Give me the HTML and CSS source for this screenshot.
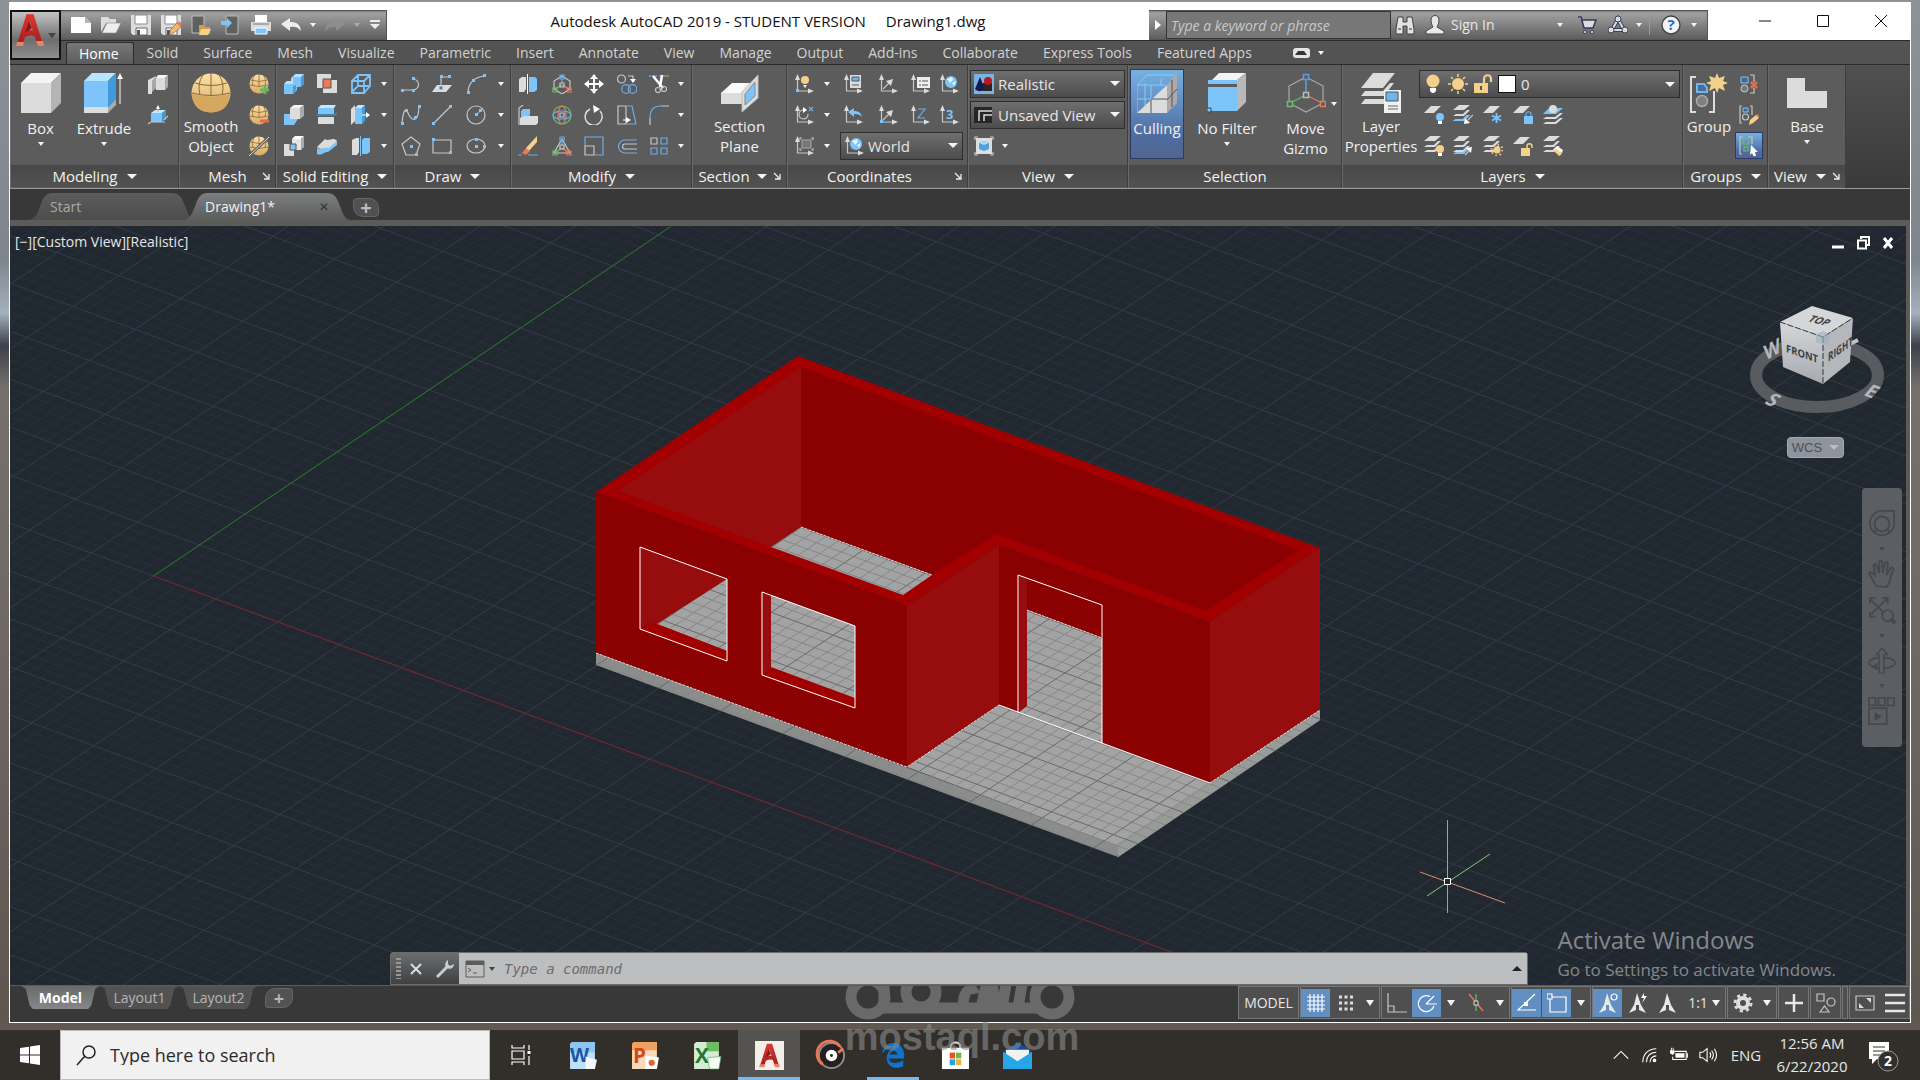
FILE: index.html
```html
<!DOCTYPE html>
<html lang="en">
<head>
    <meta charset="UTF-8">
    <title>Autodesk AutoCAD 2019</title>
    <link rel="stylesheet" href="styles.css">
</head>
<body>
<svg class="sprite" aria-hidden="true">
    <defs>
        <linearGradient id="gball" x1="0" y1="0" x2="0" y2="1"><stop offset="0" stop-color="#fbe0a8"/><stop offset="1" stop-color="#d9ab63"/></linearGradient>
        <linearGradient id="gred" x1="0" y1="0" x2="0" y2="1"><stop offset="0" stop-color="#d8372f"/><stop offset="1" stop-color="#a51c1f"/></linearGradient>
        <symbol id="logoA" viewBox="0 0 30 34"><path d="M5 31 13.500 4h3L25 31M7 23c5-4 11-4 16-1" fill="none" stroke="url(#gred)" stroke-width="5.500"/><path d="M2 29h7l-1 4H1zM21 28h7l1 5h-6z" fill="#e9846a"/><path d="M14 8l-4 12 7-5z" fill="#8c1518"/></symbol>
        <!-- quick access -->
        <symbol id="new" viewBox="0 0 20 20"><path d="M0 2h14l6 6v10H0z" fill="#fff"/><path d="M14 2v6h6z" fill="#b5b5b5"/></symbol>
        <symbol id="open" viewBox="0 0 20 20"><path d="M0 2h7l2 2h6v4H5L0 17z" class="w"/><path d="M6 8h14l-5 10H1z" fill="#eee" stroke="#888" stroke-width=".6"/></symbol>
        <symbol id="save" viewBox="0 0 20 20"><path d="M0 0h20v20H2l-2-2z" class="w"/><path d="M4 0h12v9H4z" fill="#fff" stroke="#888"/><path d="M5 13h11v7H5z" fill="#fff" stroke="#666"/><path d="M6 15h3v5H6z" fill="#555"/></symbol>
        <symbol id="saveas" viewBox="0 0 20 20"><use href="#save"/><path d="M8 20l2-6 6-6 4 4-7 6z" fill="#efb768" stroke="#555" stroke-width=".5"/><path d="M16 8l2-2 3 3-1 3z" class="r"/></symbol>
        <symbol id="mobopen" viewBox="0 0 20 20"><path d="M1 1h12v17H1z" fill="#606060" stroke="#bbb"/><path d="M8 10h5l1 2h5v7H8z" fill="#d59c47"/><path d="M10 14h10l-3 6H8z" class="t"/></symbol>
        <symbol id="mobsave" viewBox="0 0 20 20"><path d="M5 1h12v18H5z" fill="#606060" stroke="#bbb"/><path d="M0 6h6V3l5 5-5 5v-3H0z" class="b"/></symbol>
        <symbol id="print" viewBox="0 0 20 20"><path d="M4 0h12v7H4z" fill="#fff"/><path d="M0 7h20v9H0z" class="w"/><path d="M2 9h16" stroke="#777"/><path d="M4 13h12v6H4z" class="b" stroke="#fff"/></symbol>
        <symbol id="undo" viewBox="0 0 20 20"><path d="M0 9l9-6v4c7 0 10 2 11 9-3-4-6-5-11-4v4z" fill="#eee"/></symbol>
        <symbol id="redo" viewBox="0 0 20 20"><path d="M20 9l-9-6v4C4 7 1 9 0 16c3-4 6-5 11-4v4z" fill="#8e8e8e"/></symbol>
        <symbol id="custom" viewBox="0 0 12 12"><path d="M1 1h10v2H1zM1 5h10l-5 5z" fill="#eee"/></symbol>
        <symbol id="binoc" viewBox="0 0 20 20"><path d="M3 2h5v5h4V2h5l2 12v5h-7v-8H8v8H1v-5z" fill="#e2e2e2" stroke="#3e3e48"/><path d="M3 14h3M14 14h3" stroke="#888" stroke-width="2"/></symbol>
        <symbol id="user" viewBox="0 0 20 20"><path d="M6 5c0-6 8-6 8 0 0 3-1 5-2 7l7 4v3H1v-3l7-4C7 10 6 8 6 5z" fill="#e7e7e7" stroke="#444"/></symbol>
        <symbol id="cart" viewBox="0 0 20 20"><path d="M1 2h3l3 11h9l3-8H5" fill="#ddd" stroke="#333a5c" stroke-width="1.600"/><circle cx="8" cy="17" r="1.500" fill="#fff" stroke="#333a5c"/><circle cx="15" cy="17" r="1.500" fill="#fff" stroke="#333a5c"/></symbol>
        <symbol id="share" viewBox="0 0 20 20"><path d="M10 4l6 11H4z" fill="none" stroke="#39405e" stroke-width="4"/><path d="M10 4l6 11H4z" fill="none" stroke="#ddd" stroke-width="2"/><g fill="#ddd" stroke="#39405e"><circle cx="10" cy="4" r="3"/><circle cx="3" cy="15" r="3"/><circle cx="17" cy="15" r="3"/></g></symbol>
        <symbol id="help" viewBox="0 0 20 20"><circle cx="10" cy="10" r="9" fill="#f4f4f4" stroke="#444" stroke-width="1.400"/><text x="10" y="15" text-anchor="middle" fill="#1673c7" font-size="15" font-weight="700">?</text></symbol>
        <!-- modeling -->
        <symbol id="box" viewBox="0 0 40 40"><path d="M0 10h30v30H0z" class="w"/><path d="M0 10 10 0h30L30 10z" fill="#f4f4f4"/><path d="M30 10 40 0v30L30 40z" fill="#b4b4b4"/></symbol>
        <symbol id="extrude" viewBox="0 0 40 40"><path d="M0 34h24v6H0z" class="w"/><path d="M24 34l8-8v6l-8 8z" fill="#aaa"/><path d="M0 8h24v26H0z" class="b"/><path d="M0 8 8 0h24l-8 8z" fill="#b9e4fd"/><path d="M24 8l8-8v26l-8 8z" fill="#3e9be0"/><path d="M36 31V4" stroke="#fff"/><path d="M33 6l3-6 3 6z" fill="#fff"/></symbol>
        <symbol id="polysolid" viewBox="0 0 20 20"><path d="M0 6l8-4v12l-4 2v4H0z" class="w"/><path d="M4 7l4-5v12l-4 4z" fill="#a8a8a8"/><path d="M8 4h9v12H8z" class="w"/><path d="M8 4l2-3h10l-3 3z" fill="#f4f4f4"/><path d="M17 4l3-3v12l-3 3z" fill="#aaa"/></symbol>
        <symbol id="presspull" viewBox="0 0 20 20"><path d="M3 8h11v9H3z" class="b"/><path d="M3 8l4-3h11l-4 3z" fill="#c6e9fd"/><path d="M14 8l4-3v8l-4 4z" fill="#4097d7"/><path d="M0 19l3-2h14M20 11l-4 4M10 7V2" class="sw"/><path d="M8 4l2-4 2 4z" fill="#fff"/></symbol>
        <symbol id="smooth" viewBox="0 0 40 40"><circle cx="20" cy="20" r="19.500" fill="url(#gball)"/><path d="M1 20Q20 25 39 20M4 10Q20 15 36 10M20 0v23M12 2Q6 10 9 22M28 2q6 8 3 20" fill="none" stroke="#8a6a36"/><path d="M1 21Q20 26 39 21 38 39 20 39.500 2 39 1 21z" fill="#d6a75f"/></symbol>
        <symbol id="ball" viewBox="0 0 20 20"><circle cx="10" cy="10" r="9.500" fill="url(#gball)"/><path d="M1 11q9 3 18 0M2 6q8 3 16 0M10 0v12M5 2q-3 4-1 10M15 2q3 4 1 10" fill="none" stroke="#8a6a36" stroke-width=".8"/></symbol>
        <symbol id="ballplus" viewBox="0 0 20 20"><use href="#ball"/><path d="M11 16h10M16 11v10" stroke="#62b95c" stroke-width="3"/></symbol>
        <symbol id="ballminus" viewBox="0 0 20 20"><use href="#ball"/><path d="M11 16h9" stroke="#e46c4c" stroke-width="3"/></symbol>
        <symbol id="ballcut" viewBox="0 0 20 20"><use href="#ball"/><path d="M0 20 20 1" stroke="#5c5c5c" stroke-width="3"/><path d="M0 20 20 1" stroke="#ddd"/></symbol>
        <!-- solid editing -->
        <symbol id="union" viewBox="0 0 20 20"><path d="M0 10l3-3h4V4l4-4h9v10l-4 3h-3v3l-4 4H0z" class="b"/><path d="M0 10l3-3h4l1-3 4-4h8l-3 3H9v7z" fill="#b8e1fc"/><path d="M17 3l3-3v10l-3 3zM9 12l3-1v5l-3 4z" fill="#459cdc"/></symbol>
        <symbol id="interfere" viewBox="0 0 20 20"><path d="M0 0h14v14H0zM6 6h14v13H6z" class="w"/><path d="M6 5h8v9H6z" class="r" stroke="#555"/></symbol>
        <symbol id="wirebox" viewBox="0 0 20 20"><path d="M1 7h12v12H1zM1 7l6-6h12v11l-6 7M13 7l6-6M7 1v11l-6 6M7 12h11" fill="none" stroke="#7cc4fa" stroke-width="1.800"/></symbol>
        <symbol id="subtract" viewBox="0 0 20 20"><path d="M0 9h9v11H0zM9 14h5l-4 6H9z" class="b"/><path d="M6 3h10v11H6z" class="w"/><path d="M6 3l4-3h10l-4 3z" fill="#f4f4f4"/><path d="M16 3l4-3v11l-4 3z" fill="#aaa"/></symbol>
        <symbol id="slice" viewBox="0 0 20 20"><path d="M1 3h16v6H1z" class="b"/><path d="M1 3l3-3h15l-2 3z" fill="#c3e7fd"/><path d="M0 10h18l2-2" fill="none" stroke="#3a90d4" stroke-width="1.400"/><path d="M1 12h16v7H1z" class="w"/></symbol>
        <symbol id="taper" viewBox="0 0 20 20"><path d="M0 4l4-4v16l-4 4z" class="w"/><path d="M4 3h7v16H4z" class="b"/><path d="M4 3l3-3h7l-3 3z" fill="#c3e7fd"/><path d="M11 3l3-3v16l-3 3z" fill="#459cdc"/><path d="M11 10h5" stroke="#fff"/><path d="M15 7l4 3-4 3z" fill="#fff"/></symbol>
        <symbol id="intersect" viewBox="0 0 20 20"><path d="M0 8h10v12H0z" class="w"/><path d="M8 3h9v11H8z" fill="#e4e4e4"/><path d="M8 3l3-3h9l-3 3z" fill="#fff"/><path d="M17 3l3-3v11l-3 3z" fill="#aaa"/><path d="M6 8h6v6H6z" class="b" stroke="#555"/></symbol>
        <symbol id="thicken" viewBox="0 0 20 20"><path d="M0 12c6 3 6-5 13-4l7-3v4l-9 7c-5 0-6 4-11 2z" class="b"/><path d="M0 11l8-8c4 3 8-3 12 2l-8 7c-5-2-7 3-12-1z" class="w"/></symbol>
        <symbol id="separate" viewBox="0 0 20 20"><path d="M1 4l4-2h3v14l-2 3H1z" class="w"/><path d="M11 4l2-2h6v14l-3 2h-5z" class="b"/><path d="M9.500 0v20" stroke="#7cc4fa"/></symbol>
        <!-- draw -->
        <symbol id="pline" viewBox="0 0 20 20"><path d="M1 16h11a5.500 5.500 0 0 0 0-11" class="sw"/><path d="M0 15h3v3H0zM11 15h3v3h-3zM11 3h3v3h-3z" class="b"/></symbol>
        <symbol id="planar" viewBox="0 0 20 20"><path d="M5 11h15l-6 7H0z" class="w"/><path d="M9 15V3h8" class="sw"/><path d="M8 1h3v3H8zM16 1h3v3h-3z" class="b"/><path d="M7.500 12.500h3v3h-3z" fill="#3886c4"/></symbol>
        <symbol id="arc" viewBox="0 0 20 20"><path d="M2 18Q3 4 18 2" class="sw"/><path d="M1 17h3v3H1zM6 5h3v3H6zM17 0h3v3h-3z" class="b"/></symbol>
        <symbol id="spline" viewBox="0 0 20 20"><path d="M1 18C2 8 4 1 7 8s10 12 11-6" class="sw"/><path d="M0 17h3v3H0zM4 4h3v3H4zM13 11h3v3h-3zM17 0h3v3h-3z" class="b"/></symbol>
        <symbol id="line" viewBox="0 0 20 20"><path d="M2 18 18 2" class="sw"/><path d="M0 17h3v3H0zM17 0h3v3h-3z" class="b"/></symbol>
        <symbol id="circle" viewBox="0 0 20 20"><circle cx="10" cy="10" r="9" class="sw"/><path d="M10 10l5-5" class="sb"/><path d="M9 8h3v3H9zM13 4h3v3h-3z" class="b"/></symbol>
        <symbol id="polygon" viewBox="0 0 20 20"><path d="M10 1l9 7-4 11H5L1 8z" class="sw"/><path d="M9 9h3v3H9zM14 17h3v3h-3z" class="b"/></symbol>
        <symbol id="rect" viewBox="0 0 20 20"><path d="M1 4h18v13H1z" class="sw"/><path d="M0 2h3v3H0zM17 15h3v3h-3z" class="b"/></symbol>
        <symbol id="ellipse" viewBox="0 0 20 20"><ellipse cx="10" cy="10" rx="9" ry="7" class="sw"/><path d="M9 2h3v3H9zM9 9h3v3H9zM17 9h3v3h-3z" class="b"/></symbol>
        <!-- modify -->
        <symbol id="mirror" viewBox="0 0 20 20"><path d="M1 5l3-2h4v12l-2 3H1z" class="w"/><path d="M11 3h6l2 2v11l-3 2h-5z" class="b"/><path d="M9.500 0v20" stroke="#fff"/></symbol>
        <symbol id="g3move" viewBox="0 0 20 20"><path d="M10 2l8 5v8l-8 5-8-5V7z" class="sw"/><path d="M10 9V3" class="sb"/><path d="M10 11l-7 4" class="sg"/><path d="M10 11l7 4" class="sr"/><path d="M8 1h4v4H8z" class="sb"/><path d="M8 9h4v4H8z" class="sw"/><path d="M1 14h4v4H1z" class="sg"/><path d="M15 14h4v4h-4z" class="sr"/></symbol>
        <symbol id="move" viewBox="0 0 20 20"><path d="M10 2v16M2 10h16" stroke="#fff" stroke-width="2"/><path d="M6 5l4-5 4 5zM6 15l4 5 4-5zM5 6l-5 4 5 4zM15 6l5 4-5 4z" fill="#fff"/></symbol>
        <symbol id="copy" viewBox="0 0 20 20"><circle cx="4.500" cy="5" r="4" class="sw"/><path d="M11 2h5v4" class="sw"/><path d="M13 5h6l-3 4z" fill="#fff"/><circle cx="9" cy="15" r="4.300" class="sb"/><circle cx="15.500" cy="15" r="4.300" class="sb"/></symbol>
        <symbol id="trim" viewBox="0 0 20 20"><path d="M0 2h8" stroke="#5b9cdd" stroke-width="2" stroke-dasharray="2 1"/><path d="M10 2h10" stroke="#aaa"/><path d="M4 2l10 12M13 1l-2 12" stroke="#fff" stroke-width="2.500"/><circle cx="9" cy="16" r="2.500" class="sw"/><circle cx="15" cy="15" r="2.500" class="sw"/></symbol>
        <symbol id="align" viewBox="0 0 20 20"><path d="M1 20V3l4-3" class="sw"/><path d="M3 6l2-2h7v6l-3 3H3z" class="b"/><path d="M2 13l4-2h14v7l-2 2H2z" class="w"/></symbol>
        <symbol id="g3rot" viewBox="0 0 20 20"><circle cx="10" cy="10" r="9" class="sg"/><ellipse cx="10" cy="10" rx="4" ry="9" class="sr"/><ellipse cx="10" cy="10" rx="9" ry="4" class="sb"/><path d="M8 8h4v4H8z" class="sw"/></symbol>
        <symbol id="rotate" viewBox="0 0 20 20"><path d="M6 4a8.500 8.500 0 1 0 10 2" fill="none" stroke="#ddd" stroke-width="1.500"/><path d="M9 0l7 4-6 4z" fill="#fff"/></symbol>
        <symbol id="stretch" viewBox="0 0 20 20"><path d="M1 1h8v18H1z" class="sw"/><path d="M10 1h5l4 18h-9" class="sb"/><path d="M6 15h4" stroke="#fff"/><path d="M9 12l5 3-5 3z" fill="#fff"/></symbol>
        <symbol id="fillet" viewBox="0 0 20 20"><path d="M1 20v-7M12 1h8" class="sw"/><path d="M1 13Q1 1 12 1" class="sb"/></symbol>
        <symbol id="erase" viewBox="0 0 20 20"><path d="M0 19h4M10 19h10" class="sb"/><path d="M8 12l11-12v6l-9 10z" class="t"/><path d="M8 12l4 3-4 4-4-2z" class="r"/></symbol>
        <symbol id="g3scale" viewBox="0 0 20 20"><path d="M10 3l8 14H2z" class="sw"/><path d="M10 10V3" class="sb"/><path d="M10 12l-7 5" class="sg"/><path d="M10 12l7 5" class="sr"/><path d="M8 1h4v4H8z" class="sb"/><path d="M8 9h4v4H8z" class="sw"/><path d="M1 15h4v4H1z" class="sg"/><path d="M15 15h4v4h-4z" class="sr"/></symbol>
        <symbol id="scale" viewBox="0 0 20 20"><path d="M1 10V1h18v18h-8" class="sb"/><path d="M1 10h9v9H1z" class="sw"/></symbol>
        <symbol id="offset" viewBox="0 0 20 20"><path d="M20 4H8a6 6 0 0 0 0 13h12" class="sb"/><path d="M20 8H8a2.500 2.500 0 0 0 0 5h12" class="sw"/></symbol>
        <symbol id="array" viewBox="0 0 20 20"><path d="M2 2h6v6H2z" class="sw"/><path d="M12 2h6v6h-6zM2 12h6v6H2zM12 12h6v6h-6z" class="sb"/></symbol>
        <symbol id="section" viewBox="0 0 40 40"><path d="M1 20h22v11H1z" class="w"/><path d="M1 20 12 10h20l-9 10z" fill="#fafafa"/><path d="M22 19 38 2v23L22 39z" fill="#ddd" stroke="#bbb"/><path d="M25 21 35 9v14L25 32z" fill="#7cc4fa" stroke="#888"/></symbol>
        <!-- coordinates -->
        <symbol id="axes" viewBox="0 0 20 20"><path d="M3.500 3v14H17" class="sw"/><path d="M1 6l2.500-6L6 6zM14 14.500l6 2.500-6 2.500z" class="w"/></symbol>
        <symbol id="ucsicon" viewBox="0 0 20 20"><use href="#axes"/><circle cx="11" cy="6" r="4" class="t"/><path d="M9 11h4l-2 3z" fill="#fff"/><path d="M2 15h3v3H2z" class="b"/></symbol>
        <symbol id="ucsmgr" viewBox="0 0 20 20"><use href="#axes"/><path d="M7 1h11v13H7z" class="w"/><path d="M9 3h7v4H9z" fill="#6cb6ef" stroke="#555"/><path d="M9 11h7" stroke="#555"/></symbol>
        <symbol id="ucsarrow" viewBox="0 0 20 20"><use href="#axes"/><path d="M5 15l6-6" class="sw"/><path d="M15 5l-2 7-5-5z" class="w"/></symbol>
        <symbol id="ucslist" viewBox="0 0 20 20"><use href="#axes"/><path d="M7 3h13v11H7z" fill="#eee"/><path d="M9 7h2M12 7h6M9 11h2M12 11h6" stroke="#555"/></symbol>
        <symbol id="ucsworld" viewBox="0 0 20 20"><use href="#axes"/><circle cx="12" cy="8" r="6" class="b"/><path d="M8 5l5-2 1 3-3 3zM13 9l4-2-2 5z" fill="#e5f4ff"/></symbol>
        <symbol id="ucsx" viewBox="0 0 20 20"><use href="#axes"/><path d="M9 5a4.500 4.500 0 1 0 5 4" class="sw"/><path d="M9 2l4 3-4 3z" fill="#fff"/><path d="M15 2l4 4M19 2l-4 4" class="sb"/></symbol>
        <symbol id="ucsback" viewBox="0 0 20 20"><use href="#axes"/><path d="M5 7l6-4v3c5 0 7 2 8 6-3-3-5-3-8-3v3z" class="b"/></symbol>
        <symbol id="ucsorigin" viewBox="0 0 20 20"><use href="#ucsarrow"/><path d="M2 15h3v3H2z" class="b"/></symbol>
        <symbol id="ucsz" viewBox="0 0 20 20"><use href="#axes"/><path d="M8 4h7L8 13h7" class="sb"/></symbol>
        <symbol id="ucs3" viewBox="0 0 20 20"><use href="#axes"/><text x="7" y="14" fill="#7cc4fa" font-size="13" font-weight="700">3</text></symbol>
        <symbol id="ucsobj" viewBox="0 0 20 20"><use href="#axes"/><path d="M8 4h9v8H8z" fill="#777" stroke="#aaa"/><path d="M6 4V2h2M17 2h2v2M19 12v2h-2M8 14H6v-2" class="sw"/></symbol>
        <symbol id="realistic" viewBox="0 0 20 20"><path d="M0 0h20v20H0z" fill="#78b4e2"/><path d="M6 3l5 12c-3 3-7 3-10 0z" fill="#14184c"/><path d="M9 9h9v8H9z" fill="#2a2224"/><circle cx="14" cy="7" r="4" fill="#b8181c"/></symbol>
        <symbol id="unsaved" viewBox="0 0 20 20"><path d="M0 2h18v16H0z" fill="#262626"/><path d="M5 16V6h13M10 16V10h8" fill="none" stroke="#ddd" stroke-width="1.500"/></symbol>
        <symbol id="viewbox" viewBox="0 0 20 20"><path d="M2 2h16v16H2z" fill="#dedede"/><path d="M1 4V1h3M16 1h3v3M19 16v3h-3M4 19H1v-3" class="sw"/><path d="M5 7l5-2 5 2v6l-5 2-5-2z" fill="#4fa0dc"/><path d="M5 7l5-2 5 2-5 2z" fill="#a8dcfb"/></symbol>
        <!-- selection -->
        <symbol id="culling" viewBox="0 0 40 40"><path d="M0 40 30 12v28z" class="w"/><path d="M30 12 40 0v30L30 40z" fill="#aaa"/><path d="M0 40V12h28M0 26h14M14 12v14M0 12 10 2h28M8 10v22M24 12V6" fill="none" stroke="#7cd0ff"/><path d="M14 27v13M14 26h16M30 27l10-11M35 7v27" stroke="#555" fill="none"/></symbol>
        <symbol id="nofilter" viewBox="0 0 40 40"><path d="M5 7 12 0h27l-9 7z" fill="#f4f4f4"/><path d="M30 7 39 0v29l-9 9z" fill="#b9b9b9"/><path d="M1 7h29v4H1zM1 14h29v24H1z" class="b"/><path d="M0 35h4v4H0z" fill="#7cc4fa" stroke="#444"/></symbol>
        <symbol id="gizmo" viewBox="0 0 40 40"><path d="M20 4l17 9v17l-17 9-17-9V13z" fill="none" stroke="#aaa" stroke-width="1.200"/><path d="M20 21V5" class="sb"/><path d="M20 22 4 30" class="sg"/><path d="M20 22l16 8" class="sr"/><g fill="#5c5c5c" stroke-width="1.500"><path d="M17.500 1.500h5v5h-5z" stroke="#5b9cdd"/><path d="M17.500 19.500h5v5h-5z" stroke="#bbb"/><path d="M1.500 28.500h5v5h-5z" stroke="#6cc067"/><path d="M34.500 28.500h5v5h-5z" stroke="#e97b5c"/></g></symbol>
        <!-- layers -->
        <symbol id="layerprops" viewBox="0 0 40 40"><path d="M12 0h22L22 15H0zM0 23l4-5h18l7-8h4L23 23zM0 31l4-5h20v5z" class="w"/><path d="M23 17h17v23H23z" fill="#f0f0f0"/><path d="M25 19h12v9H25z" fill="#6cb6ef" stroke="#555"/><path d="M27 33h10M27 36h10" stroke="#666"/></symbol>
        <symbol id="sheet" viewBox="0 0 20 20"><path d="M7 1h10l-7 7H0z" class="w"/></symbol>
        <symbol id="sheets" viewBox="0 0 20 20"><path d="M6 0h11l-6 5H0zM0 11h11l6-6h-3l-4 4H3zM0 16h11l6-6h-3l-4 4H3z" class="w"/></symbol>
        <symbol id="bulb" viewBox="0 0 20 20"><circle cx="10" cy="7" r="6.500" class="t"/><path d="M7 14h6v3l-2 2H9l-2-2z" fill="#fff"/></symbol>
        <symbol id="sun" viewBox="0 0 20 20"><circle cx="10" cy="10" r="6" class="t"/><path d="M10 0v3M10 17v3M0 10h3M17 10h3M3 3l2 2M15 15l2 2M17 3l-2 2M3 17l2-2" stroke="#f4d18b" stroke-width="1.500"/></symbol>
        <symbol id="unlock" viewBox="0 0 20 20"><path d="M1 9h14v10H1z" class="t"/><path d="M11 9V5c0-5 7-5 7 0v3" fill="none" stroke="#f4d18b" stroke-width="2.200"/><path d="M8 12v4" stroke="#555" stroke-width="2"/></symbol>
        <symbol id="layoff" viewBox="0 0 20 20"><use href="#sheet"/><circle cx="16" cy="12" r="4" class="b"/><path d="M14 16h4v3h-4z" fill="#fff"/></symbol>
        <symbol id="layiso" viewBox="0 0 20 20"><use href="#sheets"/><path d="M0 16h11l6-6h-3l-4 4H3z" class="b"/><path d="M20 10l-5 5" class="sw"/><path d="M11 19l1-6 5 5z" fill="#fff"/></symbol>
        <symbol id="layfrz" viewBox="0 0 20 20"><use href="#sheet"/><path d="M13.500 8v10M9 10.500l9 5M9 15.500l9-5" stroke="#7cc4fa" stroke-width="1.800"/></symbol>
        <symbol id="laylck" viewBox="0 0 20 20"><use href="#sheet"/><path d="M11 11h9v8h-9z" class="b"/><path d="M13 11V9c0-3 5-3 5 0v2" class="sb"/></symbol>
        <symbol id="laycur" viewBox="0 0 20 20"><path d="M0 14h13l7-6h-3l-5 4H3zM0 19h13l7-6h-3l-5 4H3z" class="w"/><path d="M6 3h14l-7 6H0z" class="b"/><circle cx="10" cy="4" r="4" class="w"/></symbol>
        <symbol id="layon" viewBox="0 0 20 20"><use href="#sheets"/><circle cx="16" cy="13" r="4" class="t"/><path d="M14 17h4v3h-4z" fill="#fff"/></symbol>
        <symbol id="layuniso" viewBox="0 0 20 20"><use href="#sheets"/><path d="M0 18h11l6-6h-3l-4 4H3z" class="b"/><path d="M12 19l5-5" class="sw"/><path d="M19 11l-1 6-5-5z" fill="#fff"/></symbol>
        <symbol id="laythw" viewBox="0 0 20 20"><use href="#sheets"/><circle cx="14" cy="14" r="3.500" class="t"/><circle cx="14" cy="14" r="5.500" fill="none" stroke="#f4d18b" stroke-width="2" stroke-dasharray="1.500 2.800"/></symbol>
        <symbol id="layulk" viewBox="0 0 20 20"><use href="#sheet"/><path d="M8 12h9v8H8z" class="t"/><path d="M14 12v-2c0-3 5-3 5 0v2" fill="none" stroke="#f4d18b" stroke-width="1.500"/></symbol>
        <symbol id="laymch" viewBox="0 0 20 20"><use href="#sheets"/><path d="M10 14l4-4 6 4-1 3z" fill="#fff"/><path d="M10 14l4-1 5 5-3 2z" class="t"/></symbol>
        <!-- groups, base view -->
        <symbol id="group" viewBox="0 0 40 40"><path d="M7 4H2v35h5M20 39h5V18" fill="none" stroke="#ddd" stroke-width="2"/><path d="M8 11h7l3 4v4H8z" fill="#4a6d92" stroke="#6cb6ef" stroke-width="2"/><circle cx="13" cy="28" r="5.500" fill="#808080" stroke="#aaa" stroke-width="1.500"/><path d="M28 0l2 5 6-2-2 5 5 2-5 2 2 6-6-3-2 5-2-5-6 3 2-6-5-2 5-2-2-5 6 2z" class="t"/></symbol>
        <symbol id="ungroup" viewBox="0 0 20 20"><path d="M2 3h7v6H2z" fill="#44698f" stroke="#7cc4fa"/><circle cx="5.500" cy="14.500" r="3.500" fill="#777" stroke="#ccc"/><path d="M11 1h4v7M15 14v5h-4" class="sw"/><path d="M12 8l6 6M18 8l-6 6" stroke="#e46c4c" stroke-width="2.500"/></symbol>
        <symbol id="grpedit" viewBox="0 0 20 20"><path d="M3 1H1v17h2M11 1h2v9" class="sw"/><path d="M4 3h5v4H4z" fill="#44698f" stroke="#7cc4fa"/><circle cx="6.500" cy="12" r="3" class="sw"/><path d="M10 20l1-5 6-5 3 3-6 5z" class="t"/><path d="M17 10l2-1 1 2v2z" class="r"/></symbol>
        <symbol id="grpsel" viewBox="0 0 20 20"><path d="M4 1H1v17h2M9 1h4v7" class="sw"/><path d="M4 3h5l1 2v3H4zM5 11h4v4H5z" class="sg"/><path d="M12 9l7 7h-3l1 4-2 1-2-4-2 2z" fill="#fff"/></symbol>
        <symbol id="base" viewBox="0 0 40 40"><path d="M0 5h18v13h22v17H0z" class="w"/></symbol>
        <symbol id="launch" viewBox="0 0 8 8"><path d="M1 1l5 5M7 2v5H2" fill="none" stroke="#eee" stroke-width="1.300"/></symbol>
        <!-- status bar -->
        <symbol id="sgrid" viewBox="0 0 20 20"><path d="M4 1v18M8 1v18M12 1v18M16 1v18M1 4h18M1 8h18M1 12h18M1 16h18" class="sx"/></symbol>
        <symbol id="sdots" viewBox="0 0 20 20"><path d="M3 4h14M3 10h14M3 16h14" stroke="#ddd" stroke-width="3" stroke-dasharray="3 2.500"/></symbol>
        <symbol id="sortho" viewBox="0 0 20 20"><path d="M1 0v19h19M1 13h6v6" class="sw"/></symbol>
        <symbol id="spolar" viewBox="0 0 20 20"><path d="M17 13A8 8 0 1 1 13 3.500M9 11h11M9 11l8-8" class="sx"/></symbol>
        <symbol id="siso" viewBox="0 0 20 20"><path d="M3 1l14 17" class="sr"/><path d="M10 1v17" class="sg"/><path d="M8 8h4v4H8z" fill="#444" stroke="#ddd"/></symbol>
        <symbol id="strack" viewBox="0 0 20 20"><path d="M18 1 1 17h18" class="sx"/><path d="M7 9h4v4H7z" fill="#fff"/></symbol>
        <symbol id="ssnap" viewBox="0 0 20 20"><path d="M5 4h14v15H3V6" class="sx"/><path d="M0 1h5v5H0z" class="sx"/></symbol>
        <symbol id="sanno" viewBox="0 0 20 20"><path d="M9 0l4 12 5 8-7-3V12H8v5l-7 3 5-8z" fill="#e8e8e8"/></symbol>
        <symbol id="sanno1" viewBox="0 0 20 20"><use href="#sanno"/><circle cx="16" cy="4" r="3" class="sx"/></symbol>
        <symbol id="sanno2" viewBox="0 0 20 20"><use href="#sanno"/><path d="M16 0l-3 5h3l-2 5 5-7h-3z" fill="#fff"/></symbol>
        <symbol id="gear" viewBox="0 0 20 20"><circle cx="10" cy="10" r="5" fill="none" stroke="#ddd" stroke-width="4"/><circle cx="10" cy="10" r="8" fill="none" stroke="#ddd" stroke-width="3" stroke-dasharray="3.140 3.140"/></symbol>
        <symbol id="splus" viewBox="0 0 20 20"><path d="M10 1v18M1 10h18" stroke="#e8e8e8" stroke-width="2.500"/></symbol>
        <symbol id="sshapes" viewBox="0 0 20 20"><path d="M1 1h7v7H1zM4 19l4.500-6L13 19z" class="sw"/><circle cx="15" cy="9" r="4" class="sw"/></symbol>
        <symbol id="sfull" viewBox="0 0 20 20"><path d="M1 3h18v14H1z" class="sw"/><path d="M11 5h5v5zM4 10v5h5z" fill="#ddd"/></symbol>
        <symbol id="smenu" viewBox="0 0 20 20"><path d="M0 2h20M0 10h20M0 18h20" stroke="#e8e8e8" stroke-width="2.500"/></symbol>
        <!-- navigation bar -->
        <symbol id="nwheel" viewBox="0 0 30 30"><path d="M15 1h13v14a13 13 0 1 1-13-14z" class="nv"/><circle cx="15" cy="15" r="8" class="nv"/><path d="M20 20l4 4M10 20l-4 4" class="nv"/></symbol>
        <symbol id="npan" viewBox="0 0 30 30"><path d="M9 28C6 23 3 17 1 14c2-2 5 0 7 4L6 6c0-2 3-2 3 0l3 8V3c0-3 3-3 3 0l1 11 2-10c1-3 4-2 3 1l-1 11 4-7c2-2 4 0 3 2-3 6-3 13-7 18z" class="nv"/></symbol>
        <symbol id="nzoom" viewBox="0 0 30 30"><path d="M2 2l18 18M20 2 2 20M2 7V1h6M15 1h6v6M2 16v5h6" class="nv"/><circle cx="21" cy="20" r="6" fill="#5b5e63" stroke="#46494d" stroke-width="2"/><path d="M25 24l4 4" stroke="#46494d" stroke-width="4"/></symbol>
        <symbol id="norbit" viewBox="0 0 30 30"><ellipse cx="15" cy="17" rx="14" ry="6" class="nv"/><path d="M12 28V8H9l6-7 6 7h-4v20z" fill="#5b5e63" stroke="#46494d" stroke-width="1.500"/><path d="M10 17v8l-6-4z" fill="#46494d"/></symbol>
        <symbol id="nmotion" viewBox="0 0 30 30"><path d="M1 1h7v8H1zM11 1h7v8h-7zM21 1h7v8h-7zM1 12h19v17H1z" class="nv"/><path d="M7 16l8 5-8 5z" fill="#46494d"/></symbol>
    </defs>
</svg>

<div class="window">
    <header class="titlebar">
        <button class="app" aria-label="Application menu"><svg class="applogo"><use href="#logoA"/></svg><i class="caret dark"></i></button>
        <div class="qat">
            <button aria-label="New"><svg><use href="#new"/></svg></button>
            <button aria-label="Open"><svg><use href="#open"/></svg></button>
            <button aria-label="Save"><svg><use href="#save"/></svg></button>
            <button aria-label="Save as"><svg><use href="#saveas"/></svg></button>
            <button aria-label="Open from mobile"><svg><use href="#mobopen"/></svg></button>
            <button aria-label="Save to mobile"><svg><use href="#mobsave"/></svg></button>
            <button aria-label="Plot"><svg><use href="#print"/></svg></button>
            <button aria-label="Undo"><svg><use href="#undo"/></svg></button>
            <button class="thin" aria-label="Undo list"><i class="caret"></i></button>
            <button aria-label="Redo"><svg><use href="#redo"/></svg></button>
            <button class="thin" aria-label="Redo list"><i class="caret dim"></i></button>
            <button class="last" aria-label="Customize"><svg class="tiny"><use href="#custom"/></svg></button>
        </div>
        <h1 class="title"><span>Autodesk AutoCAD 2019 - STUDENT VERSION</span><span>Drawing1.dwg</span></h1>
        <div class="info">
            <button class="expand" aria-label="Collapse search"><i class="tri"></i></button>
            <input type="text" class="keyword" placeholder="Type a keyword or phrase" aria-label="Keyword">
            <button class="find" aria-label="Search"><svg><use href="#binoc"/></svg></button>
            <button class="signin"><svg><use href="#user"/></svg><span>Sign In</span><i class="caret"></i></button>
            <button class="find" aria-label="App store"><svg><use href="#cart"/></svg></button>
            <button class="pair" aria-label="Stay connected"><svg><use href="#share"/></svg><i class="caret"></i></button>
            <button class="pair sep" aria-label="Help"><svg><use href="#help"/></svg><i class="caret"></i></button>
        </div>
        <div class="winbtns">
            <button aria-label="Minimize"><svg viewBox="0 0 12 12"><path d="M0 6h12"/></svg></button>
            <button aria-label="Maximize"><svg viewBox="0 0 12 12"><path d="M.5.500h11v11H.5z"/></svg></button>
            <button aria-label="Close"><svg viewBox="0 0 12 12"><path d="M0 0l12 12M12 0 0 12"/></svg></button>
        </div>
    </header>

    <nav class="tabs">
        <a href="#" class="on">Home</a><a href="#">Solid</a><a href="#">Surface</a><a href="#">Mesh</a><a href="#">Visualize</a><a href="#">Parametric</a><a href="#">Insert</a><a href="#">Annotate</a><a href="#">View</a><a href="#">Manage</a><a href="#">Output</a><a href="#">Add-ins</a><a href="#">Collaborate</a><a href="#">Express Tools</a><a href="#">Featured Apps</a>
        <button class="minribbon" aria-label="Minimize ribbon"><span></span><i class="caret"></i></button>
    </nav>

    <div class="ribbon">
        <section class="panel p-modeling">
            <div class="tools">
                <button class="big"><svg><use href="#box"/></svg>Box<i class="caret"></i></button>
                <button class="big"><svg><use href="#extrude"/></svg>Extrude<i class="caret"></i></button>
                <div class="grid">
                    <button aria-label="Polysolid"><svg><use href="#polysolid"/></svg></button>
                    <button aria-label="Presspull"><svg><use href="#presspull"/></svg></button>
                </div>
            </div>
            <button class="plabel">Modeling<i class="caret l"></i></button>
        </section>
        <section class="panel p-mesh">
            <div class="tools">
                <button class="big two"><svg><use href="#smooth"/></svg>Smooth<br>Object</button>
                <div class="grid">
                    <button aria-label="Smooth more"><svg><use href="#ballplus"/></svg></button>
                    <button aria-label="Smooth less"><svg><use href="#ballminus"/></svg></button>
                    <button aria-label="Refine mesh"><svg><use href="#ballcut"/></svg></button>
                </div>
            </div>
            <button class="plabel">Mesh<svg class="launch"><use href="#launch"/></svg></button>
        </section>
        <section class="panel p-solid">
            <div class="tools grid">
                <button aria-label="Union"><svg><use href="#union"/></svg></button>
                <button aria-label="Interfere"><svg><use href="#interfere"/></svg></button>
                <button aria-label="Extract edges"><svg><use href="#wirebox"/></svg></button>
                <button aria-label="More edges"><i class="caret"></i></button>
                <button aria-label="Subtract"><svg><use href="#subtract"/></svg></button>
                <button aria-label="Slice"><svg><use href="#slice"/></svg></button>
                <button aria-label="Taper faces"><svg><use href="#taper"/></svg></button>
                <button aria-label="More faces"><i class="caret"></i></button>
                <button aria-label="Intersect"><svg><use href="#intersect"/></svg></button>
                <button aria-label="Thicken"><svg><use href="#thicken"/></svg></button>
                <button aria-label="Separate"><svg><use href="#separate"/></svg></button>
                <button aria-label="More bodies"><i class="caret"></i></button>
            </div>
            <button class="plabel">Solid Editing<i class="caret l"></i></button>
        </section>
        <section class="panel p-draw">
            <div class="tools grid">
                <button aria-label="Polyline"><svg><use href="#pline"/></svg></button>
                <button aria-label="Planar surface"><svg><use href="#planar"/></svg></button>
                <button aria-label="Arc"><svg><use href="#arc"/></svg></button>
                <button aria-label="More arcs"><i class="caret"></i></button>
                <button aria-label="Spline"><svg><use href="#spline"/></svg></button>
                <button aria-label="Line"><svg><use href="#line"/></svg></button>
                <button aria-label="Circle"><svg><use href="#circle"/></svg></button>
                <button aria-label="More circles"><i class="caret"></i></button>
                <button aria-label="Polygon"><svg><use href="#polygon"/></svg></button>
                <button aria-label="Rectangle"><svg><use href="#rect"/></svg></button>
                <button aria-label="Ellipse"><svg><use href="#ellipse"/></svg></button>
                <button aria-label="More ellipses"><i class="caret"></i></button>
            </div>
            <button class="plabel">Draw<i class="caret l"></i></button>
        </section>
        <section class="panel p-modify">
            <div class="tools grid">
                <button aria-label="3D mirror"><svg><use href="#mirror"/></svg></button>
                <button aria-label="3D move"><svg><use href="#g3move"/></svg></button>
                <button aria-label="Move"><svg><use href="#move"/></svg></button>
                <button aria-label="Copy"><svg><use href="#copy"/></svg></button>
                <button aria-label="Trim"><svg><use href="#trim"/></svg></button>
                <button aria-label="More trims"><i class="caret"></i></button>
                <button aria-label="3D align"><svg><use href="#align"/></svg></button>
                <button aria-label="3D rotate"><svg><use href="#g3rot"/></svg></button>
                <button aria-label="Rotate"><svg><use href="#rotate"/></svg></button>
                <button aria-label="Stretch"><svg><use href="#stretch"/></svg></button>
                <button aria-label="Fillet"><svg><use href="#fillet"/></svg></button>
                <button aria-label="More fillets"><i class="caret"></i></button>
                <button aria-label="Erase"><svg><use href="#erase"/></svg></button>
                <button aria-label="3D scale"><svg><use href="#g3scale"/></svg></button>
                <button aria-label="Scale"><svg><use href="#scale"/></svg></button>
                <button aria-label="Offset"><svg><use href="#offset"/></svg></button>
                <button aria-label="Array"><svg><use href="#array"/></svg></button>
                <button aria-label="More arrays"><i class="caret"></i></button>
            </div>
            <button class="plabel">Modify<i class="caret l"></i></button>
        </section>
        <section class="panel p-section">
            <div class="tools">
                <button class="big two"><svg><use href="#section"/></svg>Section<br>Plane</button>
            </div>
            <button class="plabel">Section<i class="caret l"></i><svg class="launch"><use href="#launch"/></svg></button>
        </section>
        <section class="panel p-coord">
            <div class="tools grid">
                <button aria-label="UCS icon"><svg><use href="#ucsicon"/></svg></button>
                <button aria-label="UCS icon list"><i class="caret"></i></button>
                <button aria-label="UCS manager"><svg><use href="#ucsmgr"/></svg></button>
                <button aria-label="UCS"><svg><use href="#ucsarrow"/></svg></button>
                <button aria-label="Named UCS"><svg><use href="#ucslist"/></svg></button>
                <button aria-label="World UCS"><svg><use href="#ucsworld"/></svg></button>
                <button aria-label="Rotate X"><svg><use href="#ucsx"/></svg></button>
                <button aria-label="Rotate list"><i class="caret"></i></button>
                <button aria-label="Previous UCS"><svg><use href="#ucsback"/></svg></button>
                <button aria-label="Origin"><svg><use href="#ucsorigin"/></svg></button>
                <button aria-label="Z vector"><svg><use href="#ucsz"/></svg></button>
                <button aria-label="3 point"><svg><use href="#ucs3"/></svg></button>
                <button aria-label="View UCS"><svg><use href="#ucsobj"/></svg></button>
                <button aria-label="View UCS list"><i class="caret"></i></button>
                <div class="combo"><svg><use href="#ucsworld"/></svg><select aria-label="UCS"><option>World</option></select><i class="caret l"></i></div>
            </div>
            <button class="plabel">Coordinates<svg class="launch"><use href="#launch"/></svg></button>
        </section>
        <section class="panel p-view">
            <div class="tools grid">
                <div class="combo"><svg><use href="#realistic"/></svg><select aria-label="Visual style"><option>Realistic</option></select><i class="caret l"></i></div>
                <div class="combo"><svg><use href="#unsaved"/></svg><select aria-label="View"><option>Unsaved View</option></select><i class="caret l"></i></div>
                <button class="vp" aria-label="Viewport configuration"><svg><use href="#viewbox"/></svg><i class="caret"></i></button>
            </div>
            <button class="plabel">View<i class="caret l"></i></button>
        </section>
        <section class="panel p-select">
            <div class="tools">
                <button class="big active"><svg><use href="#culling"/></svg>Culling</button>
                <button class="big"><svg><use href="#nofilter"/></svg>No Filter<i class="caret"></i></button>
                <button class="big"><svg><use href="#gizmo"/></svg>Move<br>Gizmo</button>
                <button class="side" aria-label="Gizmo list"><i class="caret"></i></button>
            </div>
            <div class="plabel">Selection</div>
        </section>
        <section class="panel p-layers">
            <div class="tools">
                <button class="big two"><svg><use href="#layerprops"/></svg>Layer<br>Properties</button>
                <div class="layers">
                    <div class="combo"><svg><use href="#bulb"/></svg><svg><use href="#sun"/></svg><svg><use href="#unlock"/></svg><span class="swatch"></span><select aria-label="Layer"><option>0</option></select><i class="caret l"></i></div>
                    <div class="grid">
                        <button aria-label="Layer off"><svg><use href="#layoff"/></svg></button>
                        <button aria-label="Isolate"><svg><use href="#layiso"/></svg></button>
                        <button aria-label="Freeze"><svg><use href="#layfrz"/></svg></button>
                        <button aria-label="Lock"><svg><use href="#laylck"/></svg></button>
                        <button aria-label="Make current"><svg><use href="#laycur"/></svg></button>
                        <button aria-label="Turn all on"><svg><use href="#layon"/></svg></button>
                        <button aria-label="Unisolate"><svg><use href="#layuniso"/></svg></button>
                        <button aria-label="Thaw all"><svg><use href="#laythw"/></svg></button>
                        <button aria-label="Unlock"><svg><use href="#layulk"/></svg></button>
                        <button aria-label="Match layer"><svg><use href="#laymch"/></svg></button>
                    </div>
                </div>
            </div>
            <button class="plabel">Layers<i class="caret l"></i></button>
        </section>
        <section class="panel p-groups">
            <div class="tools">
                <button class="big two"><svg><use href="#group"/></svg>Group</button>
                <div class="grid">
                    <button aria-label="Ungroup"><svg><use href="#ungroup"/></svg></button>
                    <button aria-label="Group edit"><svg><use href="#grpedit"/></svg></button>
                    <button class="active" aria-label="Group selection"><svg><use href="#grpsel"/></svg></button>
                </div>
            </div>
            <button class="plabel">Groups<i class="caret l"></i></button>
        </section>
        <section class="panel p-base">
            <div class="tools">
                <button class="big two"><svg><use href="#base"/></svg>Base<i class="caret"></i></button>
            </div>
            <button class="plabel">View<i class="caret l"></i><svg class="launch"><use href="#launch"/></svg></button>
        </section>
    </div>

    <div class="files">
        <button class="file">Start</button>
        <button class="file on">Drawing1*<span>✕</span></button>
        <button class="add" aria-label="New drawing">+</button>
    </div>

    <main class="viewport">
        <svg class="scene" viewBox="10 225 1896 759" preserveAspectRatio="xMidYMid slice">
            <defs>
                <clipPath id="floor">
                    <path d="M801 526 932 574 903 594 771 546zM727 578v72l-70-27zM771 594l84 31v72l-84-31zM1027 609l75 28v105l-84-30 9-7zM999 704l211 78 110-73v10L1118 856 596 664v-12l311 114z"/>
                </clipPath>
                <linearGradient id="face" x1="0" y1="0" x2="0" y2="1"><stop offset="0" stop-color="#d5d7da"/><stop offset="1" stop-color="#a6a9ae"/></linearGradient>
            </defs>
            <path class="grid-minor"/>
            <path class="grid-major"/>
            <path d="M153.500 575l516.500-349" stroke="#287a28"/>
            <path d="M153.500 575l1112.500 411" stroke="#7d2326"/>
            <g shape-rendering="geometricPrecision">
                <path d="M596 652l522 193 202-136v10L1118 856 596 664z" fill="#8a8d8a"/>
                <path d="M1118 845l202-136v10L1118 856z" fill="#989b98"/>
                <path d="M907 766l92-62 211 78 110-73-202 136z" fill="#a3a3a3"/>
                <path d="M596 491 798 355l522 192-110 74-211-77-92 61z" fill="#a20000"/>
                <path d="M618 490l183-124v160l-30 20z" fill="#970d0d"/>
                <path d="M801 366l498 183-93 61-210-77-64 41-131-48z" fill="#8b0000"/>
                <path d="M801 526l131 48-29 20-132-48z" fill="#a3a3a3"/>
                <path d="M596 491l311 114v161L596 652z" fill="#8b0000"/>
                <path d="M907 605l92-61v160l-92 62z" fill="#970d0d"/>
                <path d="M999 544l211 77v161l-211-78z" fill="#8b0000"/>
                <path d="M1210 621l110-74v162l-110 73z" fill="#970d0d"/>
                <path d="M640 546l87 32v82l-87-32z" fill="#970d0d"/>
                <path d="M727 578v72l-70-27z" fill="#a3a3a3"/>
                <path d="M640 628l9-6 8 1 70 27v10z" fill="#a20000"/>
                <path d="M762 591l93 34v82l-93-33z" fill="#a20000"/>
                <path d="M762 591l9 3v73l-9 7z" fill="#970d0d"/>
                <path d="M771 594l84 31v72l-84-31z" fill="#a3a3a3"/>
                <path d="M1018 574l9 4v127l-9 7z" fill="#970d0d"/>
                <path d="M1027 609l75 28v105l-84-30 9-7z" fill="#a3a3a3"/>
            </g>
            <g clip-path="url(#floor)">
                <path class="grid-minor tile"/>
                <path class="grid-major tile"/>
            </g>
            <path d="M640 546l87 32v82l-87-32zM762 591l93 34v82l-93-33zM1018 712V574l84 30v138M999 704l211 78" stroke="#fff"/>
            <path d="M801 526l131 48M596 652l311 114 92-62M1210 782l110-73M1027 609l75 28" stroke="#ddd" stroke-dasharray="3 1"/>
            <!-- crosshair -->
            <path d="M1447.500 819v93" stroke="#7ba9d6"/>
            <path d="M1427 895l63-42" stroke="#7fcb6b"/>
            <path d="M1420 871l85 31" stroke="#e08a66"/>
            <path d="M1444.500 877.500h6v6h-6z" stroke="#fff" fill="#212830"/>
        </svg>
        <button class="vplabel">[−][Custom View][Realistic]</button>
        <div class="vpwin">
            <button aria-label="Minimize drawing"><svg viewBox="0 0 14 14"><path d="M1 9.500h12v3H1z" fill="#fff"/></svg></button>
            <button aria-label="Restore drawing"><svg viewBox="0 0 14 14"><path d="M5 3V1h8v8h-2M2 4.500h8v8H2z" fill="none" stroke="#fff" stroke-width="2"/></svg></button>
            <button aria-label="Close drawing"><svg viewBox="0 0 14 14"><path d="M3 2l8 10M11 2 3 12" stroke="#fff" stroke-width="3"/></svg></button>
        </div>
        <svg class="cube" viewBox="1745 300 145 120">
            <ellipse cx="1817" cy="375" rx="61" ry="32" fill="none" stroke="#585b60" stroke-width="12"/>
            <g class="compass">
                <text x="-9" y="7" transform="translate(1772 349) rotate(-30) skewX(-20)">W</text>
                <text x="-6" y="7" transform="translate(1774 400) rotate(22) skewX(-20)">S</text>
                <text x="-5" y="7" transform="translate(1872 391) rotate(20) skewX(-20)">E</text>
                <path d="M1850 344l8-4" stroke="#c0c2c6" stroke-width="4"/>
            </g>
            <path d="M1812 306l41 12-30 19-43-15z" fill="#d4d6d8"/>
            <path d="M1780 322l43 15v47l-40-17z" fill="url(#face)"/>
            <path d="M1823 337l30-19-3 44-27 22z" fill="#b4b7bb"/>
            <path d="M1780 322l43 15 30-19M1823 337v47" fill="none" stroke="#33363a" stroke-dasharray="6 2"/>
            <path d="M1816 334l7-3 6 3v8l-6 3-7-3z" fill="#9fb0bd" opacity=".6"/>
            <g class="faces">
                <text transform="translate(1807 321) rotate(15) skewX(-30)">TOP</text>
                <text transform="translate(1786 352) rotate(19) skewX(19)">FRONT</text>
                <text transform="translate(1828 362) rotate(-35) skewX(-35)">RIGHT</text>
            </g>
        </svg>
        <button class="wcs">WCS<i class="caret"></i></button>
        <nav class="navbar">
            <button aria-label="Steering wheel"><svg><use href="#nwheel"/></svg></button><i class="caret nav"></i>
            <button class="pan" aria-label="Pan"><svg><use href="#npan"/></svg></button>
            <button aria-label="Zoom extents"><svg><use href="#nzoom"/></svg></button><i class="caret nav"></i>
            <button aria-label="Orbit"><svg><use href="#norbit"/></svg></button><i class="caret nav"></i>
            <button aria-label="Show motion"><svg><use href="#nmotion"/></svg></button>
        </nav>
        <div class="cmd">
            <div class="grip"></div>
            <button aria-label="Close command line"><svg viewBox="0 0 20 20"><path d="M5 5l10 10M15 5 5 15" stroke="#ddd" stroke-width="2"/></svg></button>
            <button aria-label="Customize command line"><svg viewBox="0 0 20 20"><path d="M2 18 12 8" stroke="#ccc" stroke-width="3"/><path d="M13 1c-3 2-4 6-1 8s7 0 7-4l-4 2-2-2z" fill="#ccc"/></svg></button>
            <label class="prompt"><svg viewBox="0 0 20 20"><path d="M1 2h18v16H1z" fill="none" stroke="#5c5c5c"/><path d="M1 2h18v4H1z" fill="#5c5c5c"/><path d="M3 9l3 2-3 2M8 14h4" fill="none" stroke="#5c5c5c"/></svg><i class="caret dark"></i>
                <input type="text" placeholder="Type a command"></label>
            <button class="hist" aria-label="Command history"><i class="tri up"></i></button>
        </div>
    </main>

    <footer class="bottom">
        <div class="layouts">
            <button class="on">Model</button><button>Layout1</button><button>Layout2</button><button class="plus" aria-label="New layout">+</button>
        </div>
        <div class="status">
            <div class="cell"><button class="model">MODEL</button></div>
            <div class="cell"><button class="on" aria-label="Grid"><svg><use href="#sgrid"/></svg></button><button aria-label="Snap"><svg><use href="#sdots"/></svg></button><button class="dd" aria-label="Snap options"><i class="caret"></i></button></div>
            <div class="cell"><button aria-label="Ortho"><svg><use href="#sortho"/></svg></button><button class="on" aria-label="Polar"><svg><use href="#spolar"/></svg></button><button class="dd" aria-label="Polar options"><i class="caret"></i></button><button aria-label="Isodraft"><svg><use href="#siso"/></svg></button><button class="dd" aria-label="Isodraft options"><i class="caret"></i></button></div>
            <div class="cell"><button class="on" aria-label="Snap tracking"><svg><use href="#strack"/></svg></button><button class="on" aria-label="Object snap"><svg><use href="#ssnap"/></svg></button><button class="dd" aria-label="Snap modes"><i class="caret"></i></button></div>
            <div class="cell"><button class="on" aria-label="Annotation visibility"><svg><use href="#sanno1"/></svg></button><button aria-label="Auto scale"><svg><use href="#sanno2"/></svg></button><button aria-label="Annotation scale"><svg><use href="#sanno"/></svg></button><button class="scale">1:1<i class="caret"></i></button></div>
            <div class="cell"><button aria-label="Workspace"><svg><use href="#gear"/></svg></button><button class="dd" aria-label="Workspaces"><i class="caret"></i></button></div>
            <div class="cell"><button aria-label="Annotation monitor"><svg><use href="#splus"/></svg></button></div>
            <div class="cell"><button aria-label="Isolate objects"><svg><use href="#sshapes"/></svg></button></div>
            <div class="cell slim"></div>
            <div class="cell"><button aria-label="Clean screen"><svg><use href="#sfull"/></svg></button><button aria-label="Customization"><svg><use href="#smenu"/></svg></button></div>
        </div>
    </footer>
</div>

<div class="taskbar">
    <button class="start" aria-label="Start"><svg viewBox="0 0 20 20"><path d="M0 3l9-1.300V9.500H0zM10 1.500 20 0v9.500H10zM0 10.500h9v7.800L0 17zM10 10.500h10V20l-10-1.500z" fill="#fff"/></svg></button>
    <label class="tsearch"><svg viewBox="0 0 20 20"><circle cx="13" cy="7" r="6" fill="none" stroke="#222" stroke-width="1.500"/><path d="M9 11l-8 9" stroke="#222" stroke-width="1.500"/></svg><input type="text" placeholder="Type here to search"></label>
    <div class="apps">
        <button aria-label="Task view"><svg class="tv" viewBox="0 0 20 20"><path d="M1 0v3h12V0M1 20v-3h12v3M1 6h12v8H1zM18 0v5M18 11v9" fill="none" stroke="#fff" stroke-width="1.200"/><path d="M16.500 6h3v3h-3z" fill="#fff"/></svg></button>
        <button aria-label="Word"><svg viewBox="0 0 28 28"><path d="M3 1h22v26H1V3z" fill="#bfe0f8"/><path d="M3 1h22v10H1V3z" fill="#8fc4ee"/><text x="1" y="20" font-size="19" font-weight="700" fill="#1757a8">W</text><path d="M16 15l11 3-2 9h-9z" fill="#f4f8fc"/></svg></button>
        <button aria-label="PowerPoint"><svg viewBox="0 0 28 28"><path d="M3 1h22v26H1V3z" fill="#fad9b8"/><path d="M3 1h22v8H1V3z" fill="#f0a15f"/><text x="2" y="21" font-size="20" font-weight="700" fill="#d24a1c">P</text><path d="M14 14l13 2-2 11H14z" fill="#fff"/><circle cx="20" cy="21" r="3" fill="#e0662f"/></svg></button>
        <button aria-label="Excel"><svg viewBox="0 0 28 28"><path d="M3 1h22v26H1V3z" fill="#d5ecd0"/><path d="M13 1h12v9H13z" fill="#6cbc62"/><text x="2" y="21" font-size="20" font-weight="700" fill="#1f7a35">X</text><path d="M14 16l13-1-2 12H16z" fill="#f4fbf2" stroke="#5fa35d" stroke-width=".6"/></svg></button>
        <button class="cur" aria-label="AutoCAD"><svg viewBox="0 0 30 30"><path d="M0 0h30v30H0z" fill="#f3efe8"/><use href="#logoA" x="3" y="2" width="24" height="26"/></svg></button>
        <button aria-label="Groove"><svg viewBox="0 0 30 30"><circle cx="15" cy="15" r="13" fill="#24211f" stroke="#8c8c94" stroke-width="2"/><path d="M6 24A13 13 0 1 1 24 6" fill="none" stroke="#e9775a" stroke-width="3"/><path d="M22 12l5-4" stroke="#e9775a" stroke-width="3"/><circle cx="15" cy="15" r="6" fill="#fff"/><circle cx="15" cy="15" r="1.500" fill="#222"/></svg></button>
        <button class="run" aria-label="Edge"><svg viewBox="0 0 30 30"><path d="M10 18h16c2-19-19-22-23-5 4-5 9-7 12-6-8 4-9 13-4 18 4 4 10 3 14 1v-6c-6 4-14 4-15-2zm1-4c1-5 8-5 8 0z" fill="#0f73d0"/></svg></button>
        <button aria-label="Store"><svg viewBox="0 0 30 30"><path d="M10 8V6c0-6 10-6 10 0v2" fill="none" stroke="#ddd" stroke-width="2"/><path d="M1 7h28v22H1z" fill="#fff"/><path d="M9 12h5.500v6H9z" fill="#e8501e"/><path d="M15.500 12H21v6h-5.500z" fill="#74b93e"/><path d="M9 19h5.500v6H9z" fill="#22a2e4"/><path d="M15.500 19H21v6h-5.500z" fill="#f0b040"/></svg></button>
        <button aria-label="Mail"><svg viewBox="0 0 30 30"><path d="M0 11 15 1l15 10v18H0z" fill="#0f4ea8"/><path d="M3 9h24v6L15 22 3 15z" fill="#f2f2f2"/><path d="M0 11l15 10 15-10v18H0z" fill="#26a5e8"/></svg></button>
    </div>
    <div class="tray">
        <button aria-label="Hidden icons"><svg viewBox="0 0 20 20"><path d="M2 14l8-8 8 8" class="tr"/></svg></button>
        <button aria-label="Network"><svg viewBox="0 0 20 20"><path d="M2 18C2 9 8 3 17 3M6 18c0-6 4-11 11-11M10 18c0-4 3-7 7-7" class="tr"/><circle cx="15" cy="16" r="2" fill="#fff"/></svg></button>
        <button aria-label="Battery"><svg viewBox="0 0 20 20"><path d="M5 6h13v9H3v-3" class="tr"/><path d="M6 8h10v5H6z" fill="#fff"/><path d="M19 8h1v5h-1zM0 5h5v3L3 10 0 8zM1 2h1v3H1zM3 2h1v3H3z" fill="#fff"/></svg></button>
        <button aria-label="Volume"><svg viewBox="0 0 20 20"><path d="M1 7h3l5-4v14l-5-4H1zM12 7q2 3 0 6M14 5q4 5 0 10M17 3q5 7 0 14" class="tr"/></svg></button>
        <button class="lang">ENG</button>
        <button class="clock"><span>12:56 AM</span><span>6/22/2020</span></button>
        <button class="note" aria-label="Notifications"><svg viewBox="0 0 32 32"><path d="M1 3h20v17H9l-5 5v-5H1z" fill="#fff"/><path d="M5 8h12M5 12h12M5 16h8" stroke="#33302c"/><circle cx="20" cy="22" r="10" fill="#33302c" stroke="#999"/><text x="20" y="27" text-anchor="middle" font-size="14" font-weight="700" fill="#fff">2</text></svg></button>
    </div>
</div>

<div class="activate"><p>Activate Windows</p><p>Go to Settings to activate Windows.</p></div>
<div class="mark">
    <svg viewBox="0 11 230 40"><g fill="none" stroke="#8b8b8b" stroke-width="11"><path d="M39 33V5M36 33h158M118 33q0-14 5-17t6 3M136 33l4-18q10-8 8 6l-2 12M157 33l4-24M173 33l4-24"/><ellipse cx="23" cy="22" rx="17" ry="17"/><circle cx="76" cy="17" r="15"/><ellipse cx="207" cy="22" rx="17" ry="17"/></g></svg>
    <span>mostaql.com</span>
</div>

<script>
    // world axes of the drawing on screen: one major cell along X and along Y
    var origin = [153.5, 575];
    var ax = [62, 22.9];
    var ay = [45.9, -31];

    function point(u, v) {
        return (origin[0] + ax[0] * u + ay[0] * v).toFixed(1) + ' ' + (origin[1] + ax[1] * u + ay[1] * v).toFixed(1);
    }

    function lines(major) {
        var d = '';
        for (var i = -150; i <= 200; i++) {
            if ((i % 5 === 0) !== major) {
                continue;
            }
            d += 'M' + point(i / 5, -40) + 'L' + point(i / 5, 40);
            d += 'M' + point(-40, i / 5) + 'L' + point(40, i / 5);
        }
        return d;
    }

    function fill(selector, d) {
        var paths = document.querySelectorAll(selector);
        for (var i = 0; i < paths.length; i++) {
            paths[i].setAttribute('d', d);
        }
    }
    fill('.grid-minor', lines(false));
    fill('.grid-major', lines(true));
</script>
</body>
</html>
```

FILE: styles.css
```css
* {
    box-sizing: border-box;
    margin: 0;
    padding: 0;
}

body {
    height: 100vh;
    display: flex;
    flex-direction: column;
    position: relative;
    overflow: hidden;
    font: 14px/20px "Open Sans", "Noto Sans", sans-serif;
    color: #e6e6e6;
    background: linear-gradient(#8d9297 0, #7f858c 24%, #a4b0bd 29%, #3c414c 32%, #75706c 36%, #6f6862 60%, #5e5750 94%, #6a6259);
}

button, input, select {
    font: inherit;
    color: inherit;
    background: none;
    border: 0;
    outline: 0;
    white-space: nowrap;
}

button {
    display: flex;
    align-items: center;
    justify-content: center;
}

svg {
    width: 20px;
    height: 20px;
    flex: none;
    overflow: visible;
}

.sprite {
    position: absolute;
    width: 0;
    height: 0;
}

/* icon paints */
.w { fill: #dcdcdc; }
.b { fill: #7cc4fa; }
.t { fill: #f4d18b; }
.r { fill: #e97b5c; }
.sw, .sb, .sg, .sr, .sx, .nv, .tr { fill: none; stroke-width: 1.2; }
.sw { stroke: #c6c6c6; }
.sb { stroke: #6cabe6; }
.sg { stroke: #6cc067; }
.sr { stroke: #e97b5c; }
.sx, .tr { stroke: #fff; }
.nv { stroke: #46494d; stroke-width: 2; }

.caret {
    border: 3px solid transparent;
    border-top: 4px solid #f4f4f4;
    border-bottom: 0;
    flex: none;
}
.caret.l { border-width: 5px 5px 0; }
.caret.dark { border-top-color: #444; }
.caret.dim { border-top-color: #aaa; }
.caret.nav { border-top-color: #46494d; align-self: center; }

.tri {
    border: 5px solid transparent;
    border-left: 6px solid #fff;
    border-right: 0;
}
.tri.up {
    border: 5px solid transparent;
    border-bottom: 5px solid #222;
    border-top: 0;
}

.window {
    flex: 1;
    min-height: 0;
    margin: 2px 9px 7px;
    border: 1px solid #fff;
    border-top: 0;
    display: flex;
    flex-direction: column;
    background: #383838;
}

/* title bar */
.titlebar {
    height: 38px;
    flex: none;
    display: flex;
    align-items: flex-end;
    background: #fff;
    padding-left: 51px;
    position: relative;
}
.app {
    position: absolute;
    z-index: 2;
    left: 0;
    top: 8px;
    width: 51px;
    height: 50px;
    border: 2px solid #111;
    background: linear-gradient(#c4c4c4, #6e6e6e 60%, #8e8e8e);
    gap: 3px;
}
.app .applogo { width: 30px; height: 34px; margin-bottom: 10px; }
.app .caret { border-width: 5px 4px 0; }

.qat, .info {
    height: 30px;
    display: flex;
    align-items: center;
    background: linear-gradient(#7f7f7f, #a0a0a0 8%, #5e5e5e);
    border: 1px solid #555;
    border-left: 0;
}
.qat { padding-left: 5px; }
.qat button { width: 30px; height: 28px; }
.qat .thin { width: 14px; }
.qat .last { width: 22px; }
.tiny { width: 12px; height: 12px; }

.title {
    flex: 1;
    display: flex;
    justify-content: center;
    align-self: center;
    gap: 20px;
    font-size: 15px;
    font-weight: 400;
    color: #111;
    white-space: nowrap;
}
.expand { width: 17px; }
.keyword {
    width: 225px;
    height: 28px;
    padding-left: 4px;
    background: #777;
    border: 1px solid #333;
}
.keyword::placeholder { color: #c9c9c9; font-style: italic; opacity: 1; }
.find { width: 28px; }
.signin { width: 154px; gap: 6px; padding: 0 10px 0 6px; }
.signin span { flex: 1; text-align: left; }
.pair { width: 48px; gap: 8px; }
.pair.sep { width: 58px; border-left: 1px solid #999; gap: 10px; }

.winbtns { display: flex; margin-left: 28px; height: 38px; }
.winbtns button { width: 58px; }
.winbtns svg { width: 12px; height: 12px; }
.winbtns path { stroke: #111; fill: none; }

/* ribbon tabs */
.tabs {
    height: 25px;
    flex: none;
    display: flex;
    align-items: flex-end;
    gap: 1px;
    padding-left: 56px;
    background: #535353;
    border-top: 1px solid #2b2b2b;
    border-bottom: 1px solid #2b2b2b;
}
.tabs a {
    padding: 0 12px;
    height: 22px;
    line-height: 22px;
    color: #d2d2d2;
    text-decoration: none;
    white-space: nowrap;
}
.tabs .on {
    color: #fff;
    background: linear-gradient(#777, #5c5c5c);
    border: 1px solid #2b2b2b;
    border-bottom: 0;
    border-radius: 3px 3px 0 0;
    padding-right: 14px;
}
.minribbon { gap: 8px; height: 22px; margin-left: 28px; }
.minribbon span {
    width: 17px;
    height: 10px;
    border-radius: 3px;
    background: #e4e4e4;
}
.minribbon span::after {
    content: "";
    display: block;
    width: 6px;
    margin: 3px auto;
    border: 3px solid transparent;
    border-top: 0;
    border-bottom: 4px solid #333;
}

/* ribbon panels */
.ribbon {
    height: 124px;
    flex: none;
    display: flex;
    background: linear-gradient(#505050, #3a3a3a);
    border-bottom: 1px solid #9a9a9a;
}
.panel {
    display: flex;
    flex-direction: column;
    background: #5c5c5c;
    border-right: 1px solid #3e3e3e;
    border-left: 1px solid #6a6a6a;
}
.tools {
    height: 100px;
    display: flex;
    padding-top: 3px;
}
.plabel {
    width: 100%;
    height: 22px;
    display: flex;
    align-items: center;
    justify-content: center;
    gap: 9px;
    position: relative;
    font-size: 15px;
    background: linear-gradient(#484848, #525252);
    color: #f2f2f2;
}
.launch {
    position: absolute;
    right: 5px;
    top: 7px;
    width: 8px;
    height: 8px;
}
.big {
    flex-direction: column;
    justify-content: flex-start;
    padding-top: 5px;
    font-size: 15px;
    color: #f0f0f0;
}
.big svg { width: 40px; height: 40px; margin-bottom: 5px; }
.big.two svg { margin-bottom: 3px; }
.big .caret { margin-top: 4px; }
.active {
    background: linear-gradient(#78b0e2, #4f6ca0 75%, #52658f);
    border: 1px solid #2b3b68;
}
.grid {
    display: grid;
    grid-auto-rows: 31px;
}

.p-modeling { width: 169px; }
.p-modeling .big { width: 68px; }
.p-modeling .big:first-child { width: 59px; }
.p-modeling .grid { flex: 1; }
.p-mesh { width: 97px; }
.p-mesh .big { width: 62px; }
.p-mesh .grid { flex: 1; }
.p-solid { width: 118px; }
.p-solid .grid { grid-template-columns: 33px 34px 33px 14px; }
.p-draw { width: 117px; }
.p-draw .grid { grid-template-columns: 32px 30px 38px 12px; }
.p-modify { width: 181px; }
.p-modify .grid { grid-template-columns: 32px 36px 28px 38px 26px 18px; }
.p-section { width: 95px; }
.p-section .big { width: 94px; }
.p-section .plabel { padding-right: 14px; gap: 7px; }
.p-coord { width: 181px; }
.p-coord .grid { grid-template-columns: 32px 14px 37px 34px 29px 29px; }
.p-coord .combo { grid-column: 3 / span 4; margin-left: 6px; }
.p-coord .plabel { padding-right: 16px; }
.p-view { width: 160px; }
.p-view .tools { padding: 3px 2px 0 1px; }
.p-view .vp { justify-content: flex-start; gap: 8px; padding-left: 4px; }
.p-select { width: 214px; }
.p-select .big { width: 84px; }
.p-select .big.active { width: 54px; height: 90px; margin: 1px; padding-top: 3px; }
.p-select .big:nth-child(3) { width: 73px; }
.p-layers { width: 341px; }
.p-layers .big { width: 76px; }
.layers { flex: 1; }
.layers .combo { margin: 2px 2px 1px 0; gap: 5px; }
.layers .grid { grid-template-columns: 29px 30px 29px 31px 30px; }
.p-groups { width: 85px; }
.p-groups .big { width: 50px; }
.p-groups .grid { grid-template-columns: 30px; }
.p-groups .active { margin: 2px 1px; }
.p-base { width: 78px; }
.p-base .big { width: 76px; }
.p-base .plabel { padding-right: 14px; }
.side { width: 8px; margin-bottom: 26px; margin-left: -12px; }

.combo {
    height: 28px;
    margin: 1px 0;
    align-self: center;
    display: flex;
    align-items: center;
    gap: 4px;
    padding: 0 4px 0 3px;
    font-size: 15px;
    border: 1px solid #2e2e2e;
    background: linear-gradient(#6f6f6f, #4c4c4c);
}
.combo select { flex: 1; min-width: 0; appearance: none; }
.swatch {
    width: 18px;
    height: 18px;
    background: #fff;
    border: 1px solid #111;
}

/* drawing tabs */
.files {
    height: 37px;
    flex: none;
    display: flex;
    align-items: flex-start;
    padding: 4px 0 0 16px;
    background: #383838;
    border-bottom: 6px solid #5b5b58;
}
.file {
    width: 170px;
    height: 27px;
    justify-content: flex-start;
    padding-left: 24px;
    margin-right: -15px;
    color: #a9a9a9;
    background: linear-gradient(#5c5c5c, #4c4c4c);
    clip-path: path("M0 27C12 27 12 16 17 6Q20 0 26 0H146Q153 0 156 6C161 16 162 27 170 27Z");
}
.file.on { color: #f2f2f2; background: linear-gradient(#7c7f80, #5c5c5c); }
.file span { margin-left: 44px; font-size: 12px; color: #333; }
.add, .plus {
    background: #505050;
    border: 1px solid #666;
    font-weight: 700;
    color: #bbb;
}
.add {
    width: 26px;
    height: 19px;
    margin: 5px 0 0 17px;
    font-size: 20px;
    border-radius: 4px 10px 4px 10px;
}

/* model space */
.viewport {
    flex: 1;
    min-height: 0;
    position: relative;
    background: #212830;
    border-right: 4px solid #5b5b58;
}
.scene {
    display: block;
    width: 100%;
    height: 100%;
    position: absolute;
    overflow: hidden;
    fill: none;
}
.grid-minor { stroke: #272f3a; }
.grid-major { stroke: #343b4a; }
.grid-minor.tile { stroke: #858789; }
.grid-major.tile { stroke: #67696c; }

.vplabel { position: absolute; left: 5px; top: 6px; }
.vpwin {
    position: absolute;
    right: 11px;
    top: 10px;
    display: flex;
    gap: 11px;
}
.vpwin svg { width: 14px; height: 14px; }
.cube {
    position: absolute;
    right: 16px;
    top: 74px;
    width: 145px;
    height: 120px;
    font-weight: 700;
}
.compass { font-size: 19px; fill: #b4b6b9; }
.faces { font-size: 10px; fill: #3c4046; }
.wcs {
    position: absolute;
    right: 62px;
    top: 211px;
    width: 57px;
    height: 21px;
    gap: 7px;
    font: 13px "Liberation Sans", sans-serif;
    color: #4c5056;
    background: #8d949d;
    border: 1px solid #a5a9af;
    border-radius: 4px;
}
.wcs .caret { border-width: 5px 5px 0; border-top-color: #b9bdc2; }
.navbar {
    position: absolute;
    right: 4px;
    top: 262px;
    width: 40px;
    height: 259px;
    padding-top: 22px;
    display: flex;
    flex-direction: column;
    align-items: center;
    gap: 9px;
    border-radius: 4px;
    background: #5b5e63;
}
.navbar svg { width: 28px; height: 28px; }

.cmd {
    position: absolute;
    left: 380px;
    right: 378px;
    bottom: 0;
    height: 33px;
    display: flex;
    border: 1px solid #6b6b6b;
    border-radius: 3px 3px 0 0;
    background: linear-gradient(#6b6d6f, #3e4042);
}
.cmd .grip {
    width: 5px;
    margin: 5px 0 5px 5px;
    background: repeating-linear-gradient(#999 0 2px, transparent 2px 4px);
}
.cmd button { width: 29px; }
.prompt {
    flex: 1;
    display: flex;
    align-items: center;
    gap: 4px;
    padding-left: 6px;
    background: #bcbebf;
}
.prompt input {
    flex: 1;
    margin-left: 5px;
    font: italic 14px "DejaVu Sans Mono", monospace;
    color: #555;
}
.prompt input::placeholder { color: #6c6c6c; opacity: 1; }
.cmd .hist { width: 20px; background: #bcbebf; }

/* layout tabs and status bar */
.bottom {
    height: 37px;
    flex: none;
    display: flex;
    justify-content: space-between;
    border-top: 1px solid #5b5b58;
}
.layouts { display: flex; padding-left: 11px; }
.layouts button {
    width: 79px;
    height: 23px;
    color: #b5b5b5;
    background: #525252;
    clip-path: polygon(0 0, 100% 0, 94% 12%, 89% 85%, 85% 100%, 15% 100%, 11% 85%, 6% 12%);
}
.layouts .on { font-weight: 700; color: #fff; background: linear-gradient(#6a6a6a, #858789); }
.layouts .plus {
    width: 28px;
    height: 20px;
    margin: 2px 0 0 7px;
    font-size: 18px;
    clip-path: none;
    border-radius: 10px 3px 10px 3px;
}
.status {
    display: flex;
    height: 33px;
    background: #4c4c4c;
    gap: 1px;
}
.cell {
    display: flex;
    align-items: center;
    gap: 1px;
    border: 1px solid #777;
    background: #4f4f4f;
}
.cell button { width: 29px; height: 28px; }
.cell .model { width: 59px; }
.cell .dd { width: 18px; }
.cell .scale { width: 42px; gap: 4px; }
.cell .on { background: #628fc1; }
.cell .caret { border-width: 6px 4px 0; }
.cell.slim { width: 6px; }

/* taskbar */
.taskbar {
    height: 50px;
    flex: none;
    display: flex;
    background: #322f2b;
}
.start { width: 60px; }
.tsearch {
    width: 430px;
    display: flex;
    align-items: center;
    gap: 14px;
    padding-left: 15px;
    background: #f1f1f1;
    border: 1px solid #bbb;
}
.tsearch input { flex: 1; font-size: 18px; color: #222; }
.tsearch input::placeholder { color: #2b2b2b; opacity: 1; }
.apps { display: flex; }
.apps button { width: 62px; border-bottom: 3px solid transparent; border-top: 3px solid transparent; }
.apps svg { width: 29px; height: 29px; }
.apps .tv { width: 20px; height: 20px; }
.apps .cur { background: #55534f; border-color: #55534f #55534f #76b9ed; border-left: 0; border-right: 0; }
.apps .run { width: 52px; margin: 0 5px; border-bottom-color: #76b9ed; }
.tray { display: flex; margin-left: auto; padding-right: 6px; font-size: 15px; }
.tray button { width: 29px; }
.tray svg { width: 18px; height: 18px; }
.tray .lang { width: 48px; }
.tray .clock { width: 84px; flex-direction: column; line-height: 23px; }
.tray .note { width: 60px; }
.tray .note svg { width: 32px; height: 32px; }

/* overlays */
.activate {
    position: absolute;
    right: 84px;
    bottom: 96px;
    color: #85888b;
    pointer-events: none;
}
.activate p { font-size: 17px; line-height: 28px; }
.activate p:first-child { font-size: 24px; line-height: 32px; }
.mark {
    position: absolute;
    left: 44%;
    bottom: 22px;
    width: 230px;
    opacity: .6;
    color: #8b8b8b;
    pointer-events: none;
}
.mark svg { width: 230px; height: 40px; display: block; overflow: hidden; }
.mark span {
    display: block;
    margin-top: -10px;
    font: 700 38px/42px "Liberation Sans", sans-serif;
    text-align: center;
}
```
